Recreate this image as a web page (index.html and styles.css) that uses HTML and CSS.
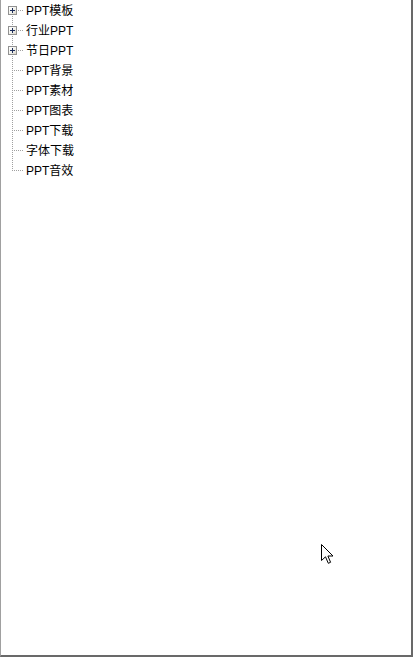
FILE: index.html
```html
<!doctype html>
<html lang="zh-CN">
  <head>
    <meta charset="UTF-8" />
    <meta name="viewport" content="width=device-width, initial-scale=1.0" />
    <title>PPT分类</title>
    <link rel="stylesheet" href="styles.css">
  </head>
  <body>
    <div class="panel">
      <ul class="tree">
        <li class="node first"><span class="gutter"><span class="expander"></span></span><span class="label">PPT模板</span></li>
        <li class="node"><span class="gutter"><span class="expander"></span></span><span class="label">行业PPT</span></li>
        <li class="node"><span class="gutter"><span class="expander"></span></span><span class="label">节日PPT</span></li>
        <li class="node"><span class="gutter"></span><span class="label">PPT背景</span></li>
        <li class="node"><span class="gutter"></span><span class="label">PPT素材</span></li>
        <li class="node"><span class="gutter"></span><span class="label">PPT图表</span></li>
        <li class="node"><span class="gutter"></span><span class="label">PPT下载</span></li>
        <li class="node"><span class="gutter"></span><span class="label">字体下载</span></li>
        <li class="node last"><span class="gutter"></span><span class="label">PPT音效</span></li>
      </ul>

      <!-- mouse pointer captured in the screenshot -->
      <svg class="pointer" width="14" height="21" viewBox="0 0 14 21">
        <path d="M0.5 0.5 L0.5 16.5 L4.5 12.8 L7.3 19.3 L9.6 18.3 L6.9 12 L12 12 Z"
              fill="#fff" stroke="#000" stroke-width="1" stroke-linejoin="miter" />
      </svg>
    </div>
  </body>
</html>
```

FILE: styles.css
```css
/* Tree view panel, Windows classic look */
html,
body {
  margin: 0;
  padding: 0;
  background-color: #fff;
}
.panel {
  position: relative;
  box-sizing: border-box;
  width: 413px;
  height: 657px;
  border-left: 1px solid #a0a0a0;
  border-right: 2px solid #696969;
  border-bottom: 2px solid #696969;
  font-family: Tahoma, "Liberation Sans", "Noto Sans CJK SC", sans-serif;
  font-size: 12px;
  color: #000;
}
.tree {
  list-style: none;
  margin: 0;
  padding: 0;
}
.node {
  display: flex;
  align-items: flex-start;
  height: 20px;
}
.gutter {
  position: relative;
  flex: 0 0 23px;
  height: 20px;
}
/* vertical dotted line through the rows */
.gutter::before {
  content: "";
  position: absolute;
  left: 11px;
  top: 0;
  width: 1px;
  height: 20px;
  background: repeating-linear-gradient(to bottom, #a0a0a0 0 1px, transparent 1px 2px);
}
.first .gutter::before {
  top: 10px;
  height: 10px;
}
.last .gutter::before {
  height: 11px;
}
/* horizontal connector to the label */
.gutter::after {
  content: "";
  position: absolute;
  left: 13px;
  top: 10px;
  width: 9px;
  height: 1px;
  background: repeating-linear-gradient(to right, #a0a0a0 0 1px, transparent 1px 2px);
}
.expander {
  position: absolute;
  z-index: 1;
  left: 7px;
  top: 6px;
  box-sizing: border-box;
  width: 9px;
  height: 9px;
  border: 1px solid #919191;
  background: linear-gradient(135deg, #fff 0%, #f0f0ea 60%, #d6d0c5 100%);
}
/* the plus sign */
.expander::before {
  content: "";
  position: absolute;
  left: 1px;
  top: 3px;
  width: 5px;
  height: 1px;
  background-color: #1c2c5a;
}
.expander::after {
  content: "";
  position: absolute;
  left: 3px;
  top: 1px;
  width: 1px;
  height: 5px;
  background-color: #1c2c5a;
}
.label {
  padding: 1px 0 0 2px;
  line-height: 20px;
  white-space: nowrap;
}
.pointer {
  position: absolute;
  left: 320px;
  top: 544px;
}
```
